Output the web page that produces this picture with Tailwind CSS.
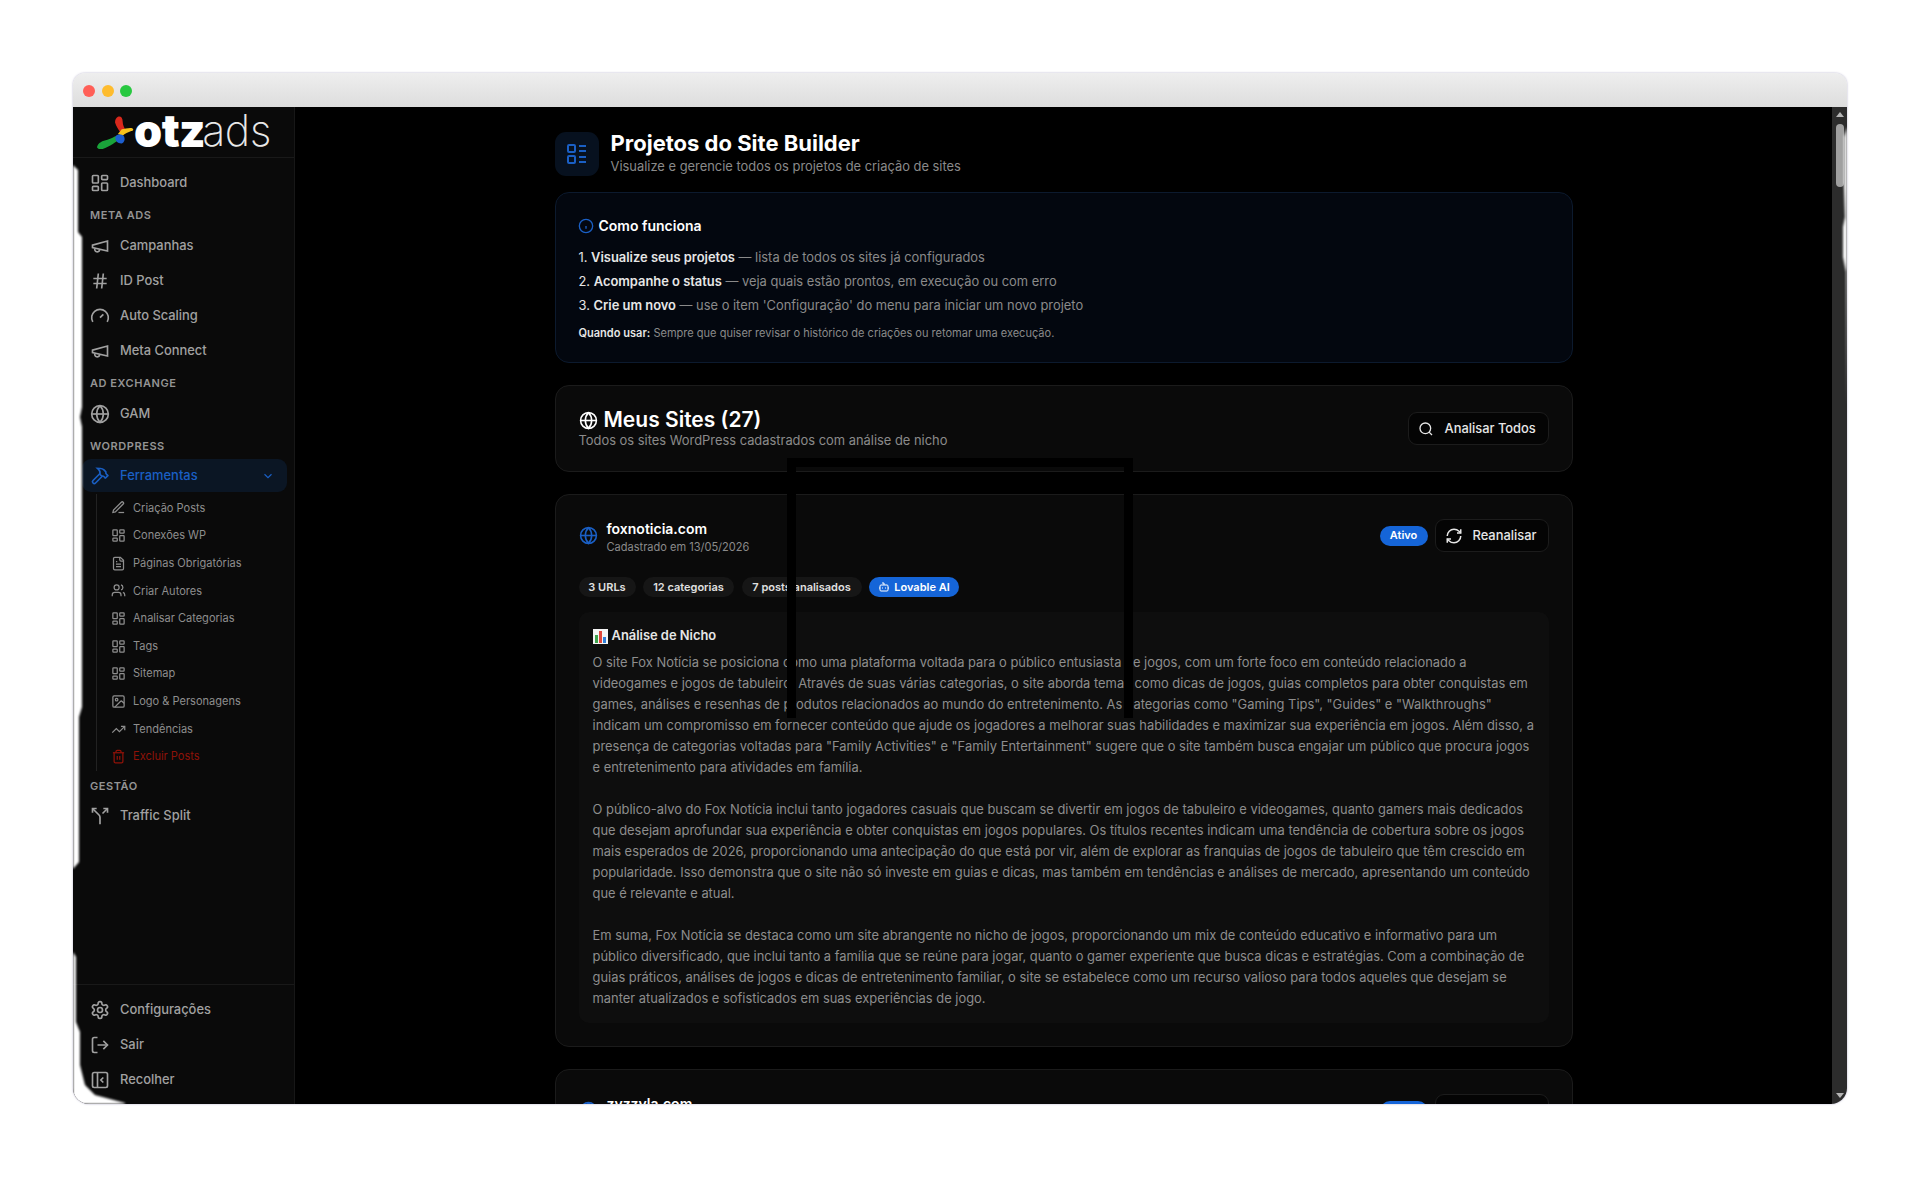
<!DOCTYPE html>
<html lang="pt-BR">

<head>
    <meta charset="UTF-8">
    <meta name="viewport" content="width=device-width, initial-scale=1.0">
    <title>Projetos do Site Builder</title>
    <script src="https://cdn.jsdelivr.net/npm/@tailwindcss/browser@4"></script>
</head>

<body class="bg-white font-['Inter',sans-serif] h-[1177px] overflow-hidden">
    <!-- icons -->
    <svg class="hidden">
        <symbol id="i-dash" viewBox="0 0 24 24"><rect x="3" y="3" width="7" height="9" rx="1"/><rect x="14" y="3" width="7" height="5" rx="1"/><rect x="14" y="12" width="7" height="9" rx="1"/><rect x="3" y="16" width="7" height="5" rx="1"/></symbol>
        <symbol id="i-mega" viewBox="0 0 24 24"><path d="m3 11 18-5v12L3 14v-3z"/><path d="M11.6 16.8a3 3 0 1 1-5.8-1.6"/></symbol>
        <symbol id="i-hash" viewBox="0 0 24 24"><path d="M4 9h16M4 15h16M10 3 8 21M16 3l-2 18"/></symbol>
        <symbol id="i-gauge" viewBox="0 0 24 24"><path d="m12 14 4-4"/><path d="M3.34 19a10 10 0 1 1 17.32 0"/></symbol>
        <symbol id="i-globe" viewBox="0 0 24 24"><circle cx="12" cy="12" r="10"/><path d="M12 2a14.5 14.5 0 0 0 0 20 14.5 14.5 0 0 0 0-20"/><path d="M2 12h20"/></symbol>
        <symbol id="i-hammer" viewBox="0 0 24 24"><path d="m15 12-8.373 8.373a1 1 0 1 1-3-3L12 9"/><path d="m18 15 4-4"/><path d="m21.5 11.5-1.914-1.914A2 2 0 0 1 19 8.172V7l-2.26-2.26a6 6 0 0 0-4.202-1.756L9 2.96l.92.82A6.18 6.18 0 0 1 12 8.4V10l2 2h1.172a2 2 0 0 1 1.414.586L18.5 14.5"/></symbol>
        <symbol id="i-chev" viewBox="0 0 24 24"><path d="m6 9 6 6 6-6"/></symbol>
        <symbol id="i-pen" viewBox="0 0 24 24"><path d="M12 20h9"/><path d="M16.5 3.5a2.12 2.12 0 0 1 3 3L7 19l-4 1 1-4Z"/></symbol>
        <symbol id="i-file" viewBox="0 0 24 24"><path d="M15 2H6a2 2 0 0 0-2 2v16a2 2 0 0 0 2 2h12a2 2 0 0 0 2-2V7Z"/><path d="M14 2v4a2 2 0 0 0 2 2h4"/><path d="M10 9H8M16 13H8M16 17H8"/></symbol>
        <symbol id="i-users" viewBox="0 0 24 24"><path d="M16 21v-2a4 4 0 0 0-4-4H6a4 4 0 0 0-4 4v2"/><circle cx="9" cy="7" r="4"/><path d="M22 21v-2a4 4 0 0 0-3-3.87"/><path d="M16 3.13a4 4 0 0 1 0 7.75"/></symbol>
        <symbol id="i-image" viewBox="0 0 24 24"><rect x="3" y="3" width="18" height="18" rx="2"/><circle cx="9" cy="9" r="2"/><path d="m21 15-3.086-3.086a2 2 0 0 0-2.828 0L6 21"/></symbol>
        <symbol id="i-trend" viewBox="0 0 24 24"><path d="m22 7-8.5 8.5-5-5L2 17"/><path d="M16 7h6v6"/></symbol>
        <symbol id="i-trash" viewBox="0 0 24 24"><path d="M3 6h18"/><path d="M19 6v14c0 1-1 2-2 2H7c-1 0-2-1-2-2V6"/><path d="M8 6V4c0-1 1-2 2-2h4c1 0 2 1 2 2v2"/><path d="M10 11v6M14 11v6"/></symbol>
        <symbol id="i-split" viewBox="0 0 24 24"><path d="M16 3h5v5"/><path d="M8 3H3v5"/><path d="M12 22v-8.3a4 4 0 0 0-1.172-2.872L3 3"/><path d="m15 9 6-6"/></symbol>
        <symbol id="i-gear" viewBox="0 0 24 24"><path d="M12.22 2h-.44a2 2 0 0 0-2 2v.18a2 2 0 0 1-1 1.73l-.43.25a2 2 0 0 1-2 0l-.15-.08a2 2 0 0 0-2.73.73l-.22.38a2 2 0 0 0 .73 2.73l.15.1a2 2 0 0 1 1 1.72v.51a2 2 0 0 1-1 1.74l-.15.09a2 2 0 0 0-.73 2.73l.22.38a2 2 0 0 0 2.73.73l.15-.08a2 2 0 0 1 2 0l.43.25a2 2 0 0 1 1 1.73V20a2 2 0 0 0 2 2h.44a2 2 0 0 0 2-2v-.18a2 2 0 0 1 1-1.73l.43-.25a2 2 0 0 1 2 0l.15.08a2 2 0 0 0 2.73-.73l.22-.39a2 2 0 0 0-.73-2.73l-.15-.08a2 2 0 0 1-1-1.74v-.5a2 2 0 0 1 1-1.74l.15-.09a2 2 0 0 0 .73-2.73l-.22-.38a2 2 0 0 0-2.73-.73l-.15.08a2 2 0 0 1-2 0l-.43-.25a2 2 0 0 1-1-1.73V4a2 2 0 0 0-2-2z"/><circle cx="12" cy="12" r="3"/></symbol>
        <symbol id="i-logout" viewBox="0 0 24 24"><path d="M9 21H5a2 2 0 0 1-2-2V5a2 2 0 0 1 2-2h4"/><path d="m16 17 5-5-5-5"/><path d="M21 12H9"/></symbol>
        <symbol id="i-panel" viewBox="0 0 24 24"><rect x="3" y="3" width="18" height="18" rx="2"/><path d="M9 3v18"/><path d="m16 15-3-3 3-3"/></symbol>
        <symbol id="i-list" viewBox="0 0 24 24"><rect x="3" y="3" width="7" height="7" rx="1"/><rect x="3" y="14" width="7" height="7" rx="1"/><path d="M14 4h7M14 9h7M14 15h7M14 20h7"/></symbol>
        <symbol id="i-info" viewBox="0 0 24 24"><circle cx="12" cy="12" r="10"/><path d="M12 16v-4M12 8h.01"/></symbol>
        <symbol id="i-search" viewBox="0 0 24 24"><circle cx="11" cy="11" r="8"/><path d="m21 21-4.3-4.3"/></symbol>
        <symbol id="i-refresh" viewBox="0 0 24 24"><path d="M3 12a9 9 0 0 1 9-9 9.75 9.75 0 0 1 6.74 2.74L21 8"/><path d="M21 3v5h-5"/><path d="M21 12a9 9 0 0 1-9 9 9.75 9.75 0 0 1-6.74-2.74L3 16"/><path d="M8 16H3v5"/></symbol>
        <symbol id="i-bot" viewBox="0 0 24 24"><path d="M12 8V4H8"/><rect x="4" y="8" width="16" height="12" rx="2"/><path d="M2 14h2M20 14h2M15 13v2M9 13v2"/></symbol>
    </svg>

    <!-- browser window -->
    <div class="relative ml-[73px] mt-[73px] w-[1774px] h-[1031px] flex flex-col rounded-t-[12px] rounded-b-[16px] overflow-hidden shadow-[0_0_2px_rgba(90,80,140,0.5)]">
        <div class="h-[34px] shrink-0 flex items-center gap-[6.5px] pl-[10px] pt-[2px] bg-gradient-to-b from-[#eeeeee] to-[#dddddd]">
            <span class="w-3 h-3 rounded-full bg-[#ff5f57]"></span>
            <span class="w-3 h-3 rounded-full bg-[#febc2e]"></span>
            <span class="w-3 h-3 rounded-full bg-[#28c840]"></span>
        </div>

        <div class="flex flex-1 min-h-0">
            <!-- sidebar -->
            <aside class="w-[222px] shrink-0 flex flex-col bg-[#0a0a0a] border-r border-[#171717] text-[#a1a1a1] text-[12.9px] font-medium">
                <div class="h-[51px] shrink-0 border-b border-[#191919] flex items-center pl-[23px]">
                    <svg class="w-[40px] h-[36px] -mr-[2px] mt-[1px]" viewBox="0 0 42 36">
                        <path d="M1 33c1-5 6-7 11-8 4-1 7-3 10-4l2 4c-3 2-5 4-9 6-5 3-12 6-14 2z" fill="#1aa33a"/>
                        <path d="M23 1c3-1 5 1 5 5s2 7 3 9l-5 3c-2-3-5-7-6-11 0-3 1-5 3-6z" fill="#d8281c"/>
                        <path d="M27 14c3 0 8-2 11-1 2 1 1 3-1 3-3 1-7 3-9 5l-5-2z" fill="#f6c21c"/>
                        <path d="M21 21c2-2 6-2 8 0 2 3 1 7-2 8-3 0-5-1-6-3-1-2-1-3 0-5z" fill="#1d5fd0"/>
                    </svg>
                    <span class="text-[45px] leading-none font-black text-white tracking-[-0.5px] -mt-[3px]">otz</span><span class="-ml-[3px] text-[43px] leading-none font-extralight text-[#e8e8e8] tracking-[-0.5px] -mt-[3px]">ads</span>
                </div>

                <nav class="flex-1 pt-[7px]">
                    <a class="h-[35px] flex items-center gap-[10px] pl-[17px]"><svg class="w-5 h-5 fill-none stroke-current stroke-2"><use href="#i-dash"/></svg>Dashboard</a>
                    <div class="h-[28px] pt-[3px] pl-[17px] flex items-center text-[11px] font-semibold tracking-[0.55px] text-[#949494]">META ADS</div>
                    <a class="h-[35px] flex items-center gap-[10px] pl-[17px]"><svg class="w-5 h-5 fill-none stroke-current stroke-2"><use href="#i-mega"/></svg>Campanhas</a>
                    <a class="h-[35px] flex items-center gap-[10px] pl-[17px]"><svg class="w-5 h-5 fill-none stroke-current stroke-2"><use href="#i-hash"/></svg>ID Post</a>
                    <a class="h-[35px] flex items-center gap-[10px] pl-[17px]"><svg class="w-5 h-5 fill-none stroke-current stroke-2"><use href="#i-gauge"/></svg>Auto Scaling</a>
                    <a class="h-[35px] flex items-center gap-[10px] pl-[17px]"><svg class="w-5 h-5 fill-none stroke-current stroke-2"><use href="#i-mega"/></svg>Meta Connect</a>
                    <div class="h-[28px] pt-[3px] pl-[17px] flex items-center text-[11px] font-semibold tracking-[0.55px] text-[#949494]">AD EXCHANGE</div>
                    <a class="h-[35px] flex items-center gap-[10px] pl-[17px]"><svg class="w-5 h-5 fill-none stroke-current stroke-2"><use href="#i-globe"/></svg>GAM</a>
                    <div class="h-[28px] pt-[3px] pl-[17px] flex items-center text-[11px] font-semibold tracking-[0.55px] text-[#949494]">WORDPRESS</div>
                    <a class="h-[33px] ml-[9px] mr-[7px] rounded-[9px] bg-[#0b1624] text-[#1a5fc4] flex items-center gap-[10px] pl-[8px] pr-[12px]"><svg class="w-5 h-5 fill-none stroke-current stroke-2"><use href="#i-hammer"/></svg><span class="flex-1">Ferramentas</span><svg class="w-[14px] h-[14px] fill-none stroke-current stroke-2"><use href="#i-chev"/></svg></a>
                    <div class="ml-[23px] mt-[2px] border-l border-[#222222] pl-[14px] text-[11.04px] font-normal text-[#8e8e8e]">
                        <a class="h-[27.67px] flex items-center gap-[7px]"><svg class="w-[15px] h-[15px] fill-none stroke-current stroke-2"><use href="#i-pen"/></svg>Criação Posts</a>
                        <a class="h-[27.67px] flex items-center gap-[7px]"><svg class="w-[15px] h-[15px] fill-none stroke-current stroke-2"><use href="#i-dash"/></svg>Conexões WP</a>
                        <a class="h-[27.67px] flex items-center gap-[7px]"><svg class="w-[15px] h-[15px] fill-none stroke-current stroke-2"><use href="#i-file"/></svg>Páginas Obrigatórias</a>
                        <a class="h-[27.67px] flex items-center gap-[7px]"><svg class="w-[15px] h-[15px] fill-none stroke-current stroke-2"><use href="#i-users"/></svg>Criar Autores</a>
                        <a class="h-[27.67px] flex items-center gap-[7px]"><svg class="w-[15px] h-[15px] fill-none stroke-current stroke-2"><use href="#i-dash"/></svg>Analisar Categorias</a>
                        <a class="h-[27.67px] flex items-center gap-[7px]"><svg class="w-[15px] h-[15px] fill-none stroke-current stroke-2"><use href="#i-dash"/></svg>Tags</a>
                        <a class="h-[27.67px] flex items-center gap-[7px]"><svg class="w-[15px] h-[15px] fill-none stroke-current stroke-2"><use href="#i-dash"/></svg>Sitemap</a>
                        <a class="h-[27.67px] flex items-center gap-[7px]"><svg class="w-[15px] h-[15px] fill-none stroke-current stroke-2"><use href="#i-image"/></svg>Logo &amp; Personagens</a>
                        <a class="h-[27.67px] flex items-center gap-[7px]"><svg class="w-[15px] h-[15px] fill-none stroke-current stroke-2"><use href="#i-trend"/></svg>Tendências</a>
                        <a class="h-[27.67px] flex items-center gap-[7px] text-[#8f1208]"><svg class="w-[15px] h-[15px] fill-none stroke-current stroke-2"><use href="#i-trash"/></svg>Excluir Posts</a>
                    </div>
                    <div class="h-[27.5px] pt-[3px] pl-[17px] flex items-center text-[11px] font-semibold tracking-[0.55px] text-[#949494]">GESTÃO</div>
                    <a class="h-[35px] flex items-center gap-[10px] pl-[17px]"><svg class="w-5 h-5 fill-none stroke-current stroke-2"><use href="#i-split"/></svg>Traffic Split</a>
                </nav>

                <div class="border-t border-[#191919] pt-[7px] pb-[7px]">
                    <a class="h-[35px] flex items-center gap-[10px] pl-[17px]"><svg class="w-5 h-5 fill-none stroke-current stroke-2"><use href="#i-gear"/></svg>Configurações</a>
                    <a class="h-[35px] flex items-center gap-[10px] pl-[17px]"><svg class="w-5 h-5 fill-none stroke-current stroke-2"><use href="#i-logout"/></svg>Sair</a>
                    <a class="h-[35px] flex items-center gap-[10px] pl-[17px]"><svg class="w-5 h-5 fill-none stroke-current stroke-2"><use href="#i-panel"/></svg>Recolher</a>
                </div>
            </aside>

            <!-- main -->
            <main class="flex-1 min-w-0 overflow-hidden bg-black pt-[25px]">
                <div class="mx-auto w-[1018px] flex flex-col gap-[22px]">
                    <header class="flex items-center gap-3 h-[44px] -mb-[6px]">
                        <div class="w-11 h-11 rounded-[11px] bg-[#07111f] flex items-center justify-center text-[#1a5fc4]">
                            <svg class="w-6 h-6 fill-none stroke-current stroke-2"><use href="#i-list"/></svg>
                        </div>
                        <div class="-mt-[1px]">
                            <h1 class="text-[22px] leading-[25px] font-bold text-white">Projetos do Site Builder</h1>
                            <p class="mt-[1px] text-[12.9px] leading-[19px] text-[#8a8a8a]">Visualize e gerencie todos os projetos de criação de sites</p>
                        </div>
                    </header>

                    <section class="h-[171px] rounded-[14px] border border-[#0c1a2e] bg-[#03070f] px-[23px] pt-[23px]">
                        <h2 class="flex items-center gap-[5px] text-[14px] leading-[20px] font-semibold text-white"><svg class="w-[16px] h-[16px] -ml-[1px] fill-none stroke-[#1a5fc4] stroke-2"><use href="#i-info"/></svg>Como funciona</h2>
                        <ol class="mt-[10px] text-[12.9px] leading-[24px] text-[#8a8a8a]">
                            <li><span class="text-[#e6e6e6]">1. <b class="font-semibold">Visualize seus projetos</b></span> — lista de todos os sites já configurados</li>
                            <li><span class="text-[#e6e6e6]">2. <b class="font-semibold">Acompanhe o status</b></span> — veja quais estão prontos, em execução ou com erro</li>
                            <li><span class="text-[#e6e6e6]">3. <b class="font-semibold">Crie um novo</b></span> — use o item 'Configuração' do menu para iniciar um novo projeto</li>
                        </ol>
                        <p class="mt-[7px] text-[11.04px] leading-[16px] text-[#8a8a8a]"><b class="font-semibold text-[#e6e6e6]">Quando usar:</b> Sempre que quiser revisar o histórico de criações ou retomar uma execução.</p>
                    </section>

                    <section class="h-[87px] rounded-[14px] border border-[#1b1b1b] bg-[#0a0a0a] px-[23px] flex items-center justify-between">
                        <div class="-mt-[2px]">
                            <h2 class="flex items-center gap-[6px] text-[21px] leading-[26px] font-semibold text-white"><svg class="w-[19px] h-[19px] fill-none stroke-current stroke-2"><use href="#i-globe"/></svg>Meus Sites (27)</h2>
                            <p class="text-[12.9px] leading-[15px] text-[#8a8a8a]">Todos os sites WordPress cadastrados com análise de nicho</p>
                        </div>
                        <button class="h-[33px] w-[141px] rounded-[9px] border border-[#1c1c1c] bg-[#040404] flex items-center pl-[9px] gap-[11px] text-[12.9px] font-medium text-[#e6e6e6]"><svg class="w-4 h-4 fill-none stroke-current stroke-2"><use href="#i-search"/></svg>Analisar Todos</button>
                    </section>

                    <section class="h-[553px] rounded-[14px] border border-[#1b1b1b] bg-[#0a0a0a] px-[23px] pt-[24px]">
                        <div class="flex items-center justify-between h-[33px]">
                            <div class="flex items-center gap-[9px]">
                                <svg class="w-[19px] h-[19px] fill-none stroke-[#1a5fc4] stroke-2"><use href="#i-globe"/></svg>
                                <div class="pt-[3px]">
                                    <h3 class="text-[14px] leading-[18px] font-semibold text-white">foxnoticia.com</h3>
                                    <p class="mt-[1px] text-[11.04px] leading-[16px] text-[#8a8a8a]">Cadastrado em 13/05/2026</p>
                                </div>
                            </div>
                            <div class="flex items-center gap-[7px]">
                                <span class="h-5 w-12 rounded-full bg-[#1565d8] flex items-center justify-center text-[11px] font-semibold text-white">Ativo</span>
                                <button class="h-[33px] w-[114px] rounded-[9px] border border-[#1c1c1c] bg-[#040404] flex items-center pl-[9px] gap-[10px] text-[12.9px] font-medium text-[#e6e6e6]"><svg class="w-[18px] h-[18px] fill-none stroke-current stroke-2"><use href="#i-refresh"/></svg>Reanalisar</button>
                            </div>
                        </div>
                        <div class="flex gap-[7.5px] mt-[25px] text-[11px] leading-[20px] font-semibold text-[#e0e0e0]">
                            <span class="h-5 w-[57px] rounded-full bg-[#161616] text-center">3 URLs</span>
                            <span class="h-5 w-[91px] rounded-full bg-[#161616] text-center">12 categorias</span>
                            <span class="h-5 w-[120px] rounded-full bg-[#161616] text-center">7 posts analisados</span>
                            <span class="h-5 w-[90px] rounded-full bg-[#1565d8] text-white flex items-center justify-center gap-1"><svg class="w-3 h-3 fill-none stroke-current stroke-2"><use href="#i-bot"/></svg>Lovable AI</span>
                        </div>
                        <div class="mt-[15px] h-[411px] rounded-[10px] bg-[#0e0e0e] px-[14px] pt-[13px]">
                            <h4 class="flex items-center gap-1 text-[12.9px] leading-[22px] font-semibold text-[#e6e6e6]">
                                <svg class="w-[15px] h-[15px]" viewBox="0 0 15 15"><rect width="15" height="15" fill="#f4f4f4"/><rect x="2" y="6" width="3" height="8" fill="#3fa34d"/><rect x="6" y="2" width="3" height="12" fill="#e0483c"/><rect x="10" y="8" width="3" height="6" fill="#2f7fd8"/></svg>
                                Análise de Nicho
                            </h4>
                            <div class="mt-[5px] text-[12.92px] leading-[21px] text-[#8d8d8d] whitespace-pre-line">O site Fox Notícia se posiciona como uma plataforma voltada para o público entusiasta de jogos, com um forte foco em conteúdo relacionado a videogames e jogos de tabuleiro. Através de suas várias categorias, o site aborda temas como dicas de jogos, guias completos para obter conquistas em games, análises e resenhas de produtos relacionados ao mundo do entretenimento. As categorias como "Gaming Tips", "Guides" e "Walkthroughs" indicam um compromisso em fornecer conteúdo que ajude os jogadores a melhorar suas habilidades e maximizar sua experiência em jogos. Além disso, a presença de categorias voltadas para "Family Activities" e "Family Entertainment" sugere que o site também busca engajar um público que procura jogos e entretenimento para atividades em família.

O público-alvo do Fox Notícia inclui tanto jogadores casuais que buscam se divertir em jogos de tabuleiro e videogames, quanto gamers mais dedicados que desejam aprofundar sua experiência e obter conquistas em jogos populares. Os títulos recentes indicam uma tendência de cobertura sobre os jogos mais esperados de 2026, proporcionando uma antecipação do que está por vir, além de explorar as franquias de jogos de tabuleiro que têm crescido em popularidade. Isso demonstra que o site não só investe em guias e dicas, mas também em tendências e análises de mercado, apresentando um conteúdo que é relevante e atual.

Em suma, Fox Notícia se destaca como um site abrangente no nicho de jogos, proporcionando um mix de conteúdo educativo e informativo para um público diversificado, que inclui tanto a família que se reúne para jogar, quanto o gamer experiente que busca dicas e estratégias. Com a combinação de guias práticos, análises de jogos e dicas de entretenimento familiar, o site se estabelece como um recurso valioso para todos aqueles que desejam se manter atualizados e sofisticados em suas experiências de jogo.</div>
                        </div>
                    </section>

                    <section class="h-[300px] rounded-[14px] border border-[#1b1b1b] bg-[#0a0a0a] px-[23px] pt-[24px]">
                        <div class="flex items-center justify-between h-[33px]">
                            <div class="flex items-center gap-[9px]">
                                <svg class="w-[19px] h-[19px] fill-none stroke-[#1a5fc4] stroke-2"><use href="#i-globe"/></svg>
                                <div class="pt-[3px]">
                                    <h3 class="text-[14px] leading-[18px] font-semibold text-white">zyzzyla.com</h3>
                                    <p class="mt-[1px] text-[11.04px] leading-[16px] text-[#8a8a8a]">Cadastrado em 13/05/2026</p>
                                </div>
                            </div>
                            <div class="flex items-center gap-[7px]">
                                <span class="h-5 w-12 rounded-full bg-[#1565d8]"></span>
                                <button class="h-[33px] w-[114px] rounded-[9px] border border-[#1c1c1c] bg-[#040404]"></button>
                            </div>
                        </div>
                    </section>
                </div>
            </main>

            <!-- scrollbar -->
            <div class="w-[15px] shrink-0 bg-[#2c2c2c] flex flex-col items-center pt-[5px]">
                <span class="w-0 h-0 border-x-[4px] border-x-transparent border-b-[5px] border-b-[#b5b5b5]"></span>
                <span class="mt-[7px] w-[8px] h-[63px] rounded-full bg-[#a0a0a0]"></span>
                <span class="mt-auto mb-[6px] w-0 h-0 border-x-[4px] border-x-transparent border-t-[5px] border-t-[#b5b5b5]"></span>
            </div>
        </div>

        <!-- black frame that lies over the content in the capture -->
        <div class="absolute left-[714px] top-[385px] w-[346px] h-[260px] border-x-[9px] border-t-[9px] border-black"></div>
        <!-- torn left and right edges of the capture -->
        <svg class="absolute left-0 top-[34px] w-[60px] h-[997px] fill-white blur-[1px]" viewBox="0 0 60 997">
            <polygon points="-2,0 0,0 0,58 5,63 5,125 9,130 9,300 7,310 9,320 9,600 6,610 6,755 0,762 0,845 3,850 3,915 7,925 7,958 12,978 22,988 52,996 52,999 -2,999"/>
        </svg>
        <svg class="absolute right-0 top-[34px] w-[6px] h-[300px] fill-white blur-[1px]" viewBox="0 0 6 300">
            <polygon points="6,20 3,30 3,80 4,110 2,120 2,150 5,165 6,300 8,300 8,20"/>
        </svg>
    </div>
</body>

</html>
